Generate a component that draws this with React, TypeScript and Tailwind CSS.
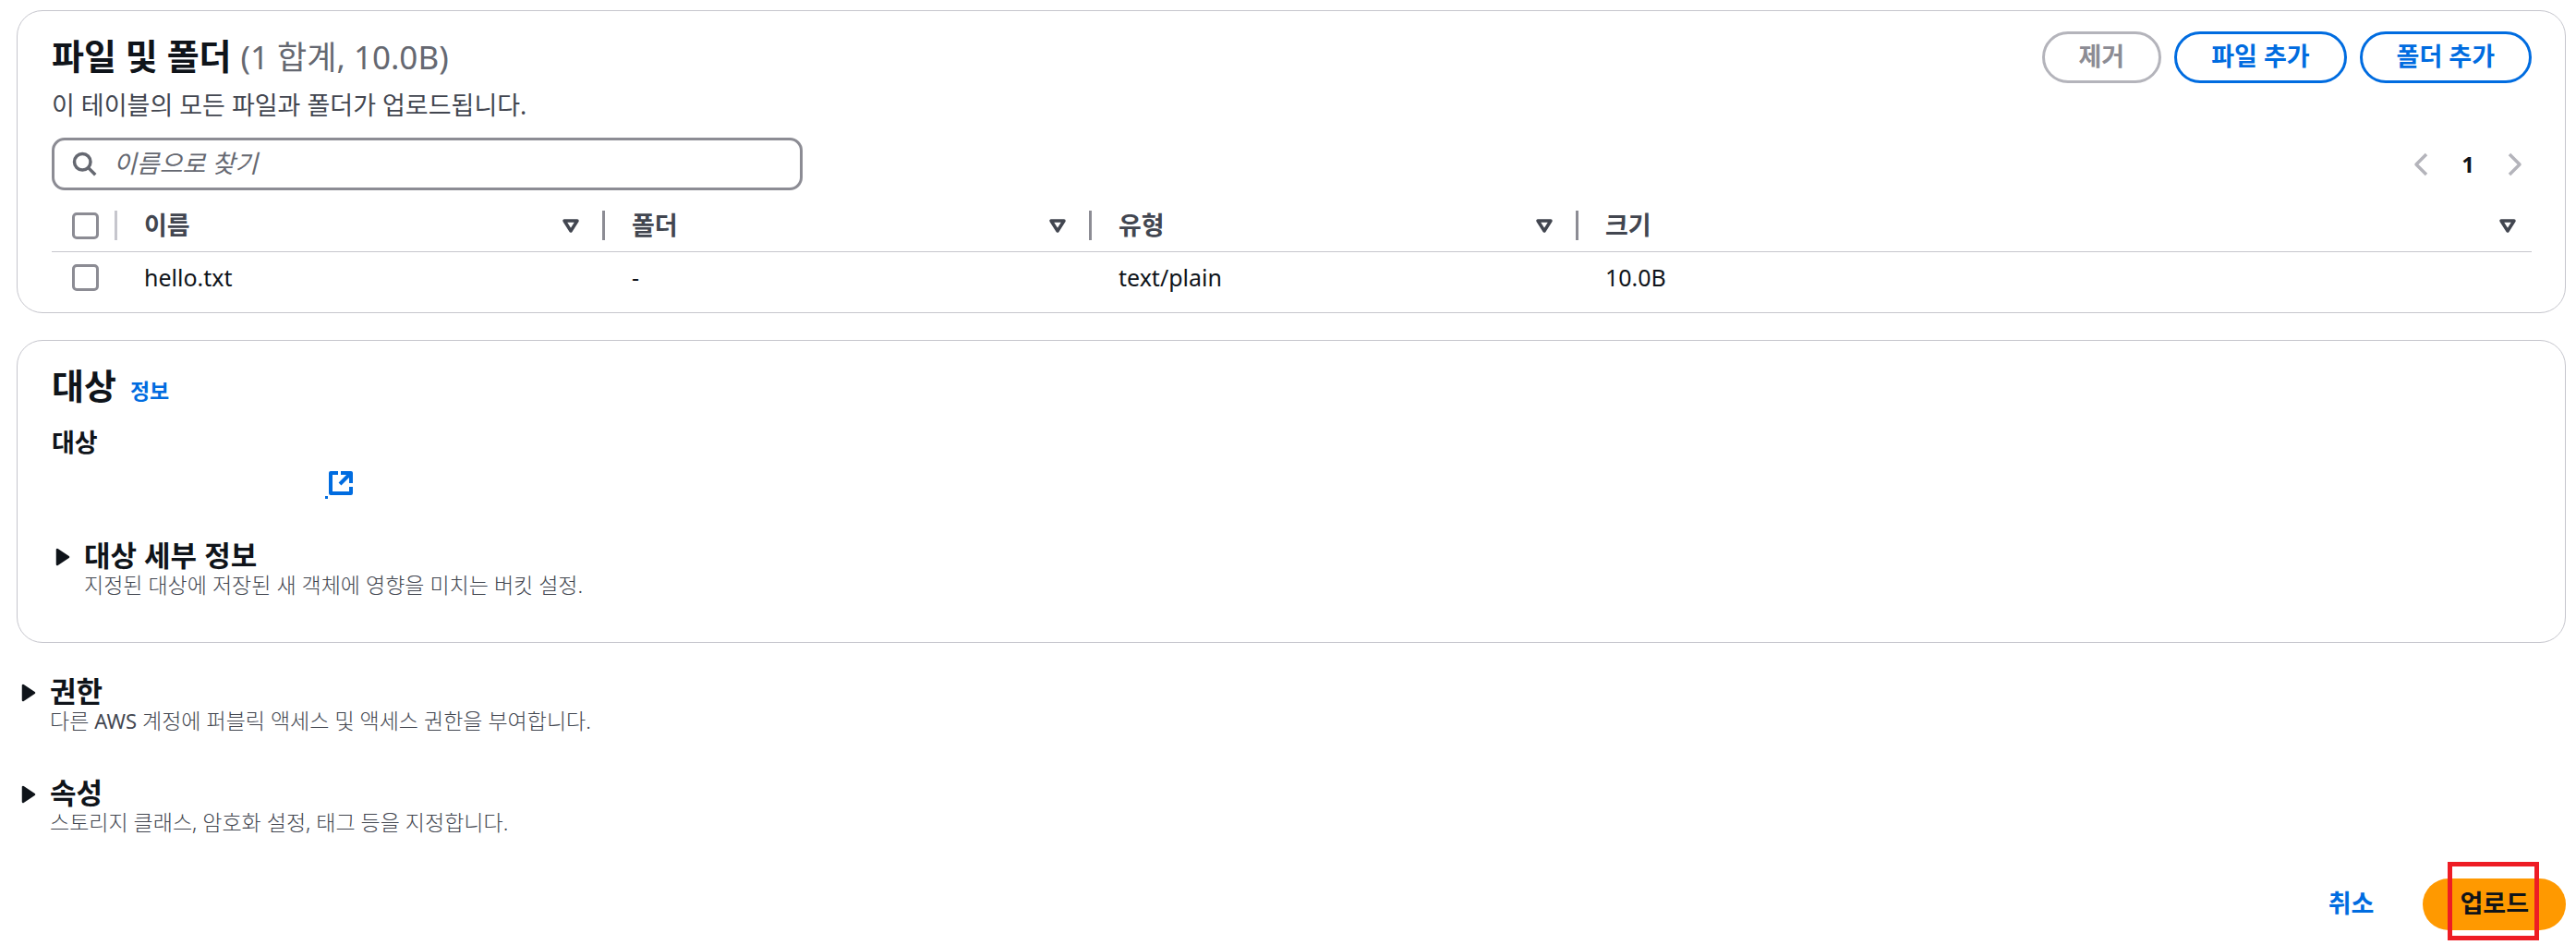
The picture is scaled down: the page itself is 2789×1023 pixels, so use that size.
import { useState } from 'react';
import type { ReactNode } from 'react';

type FileRow = {
  name: string;
  folder: string;
  type: string;
  size: string;
};

const files: FileRow[] = [
  { name: 'hello.txt', folder: '-', type: 'text/plain', size: '10.0B' },
];

const columns = ['이름', '폴더', '유형', '크기'];

const checkboxClass =
  'block size-[29px] appearance-none rounded-[5px] border-[3px] border-[#8c8c94] bg-white checked:bg-[#006ce0]';

function SearchIcon() {
  return (
    <svg width="28" height="28" viewBox="0 0 16 16" fill="none" stroke="#656871" strokeWidth="2" aria-hidden="true">
      <circle cx="7" cy="7" r="5" />
      <path d="m15 15-4.5-4.5" />
    </svg>
  );
}

function SortIcon() {
  return (
    <svg width="20" height="18" viewBox="0 0 20 18" fill="none" stroke="#424650" strokeWidth="3.5" strokeLinejoin="round" aria-hidden="true">
      <path d="M3 4h14l-7 11z" />
    </svg>
  );
}

function Chevron({ d }: { d: string }) {
  return (
    <svg width="16" height="26" viewBox="0 0 16 26" fill="none" stroke="#b4b4bb" strokeWidth="3.5" strokeLinejoin="round" aria-hidden="true">
      <path d={d} />
    </svg>
  );
}

function ExternalIcon() {
  return (
    <svg width="28" height="28" viewBox="0 0 28 28" fill="none" stroke="#006ce0" strokeWidth="4" strokeLinejoin="round" aria-hidden="true">
      <path d="M11 3H3v22h22v-7" />
      <path d="M14 3h11v11" />
      <path d="M24 4 13 15" />
    </svg>
  );
}

function PillButton({ children, disabled }: { children: ReactNode; disabled?: boolean }) {
  return (
    <button
      type="button"
      disabled={disabled}
      className="h-14 rounded-full border-[3px] border-[#006ce0] px-[37px] pb-[3px] text-[27px] leading-8 font-bold text-[#006ce0] disabled:border-[#b4b4bb] disabled:text-[#8c8c94]"
    >
      {children}
    </button>
  );
}

function Expandable({ title, children }: { title: string; children: ReactNode }) {
  const [open, setOpen] = useState(false);

  return (
    <section className="flex gap-[15px]">
      <svg width="16" height="20" viewBox="0 0 16 20" className="mt-[14px]" aria-hidden="true">
        <path d="M2 2v16l12-8z" fill="#0f141a" stroke="#0f141a" strokeWidth="2.5" strokeLinejoin="round" />
      </svg>
      <div>
        <h3>
          <button
            type="button"
            aria-expanded={open}
            onClick={() => setOpen(!open)}
            className="block text-[31px] leading-[44px] font-bold"
          >
            {title}
          </button>
        </h3>
        <p className="-mt-[6px] text-[23px] leading-8 font-light text-[#424650]">{children}</p>
      </div>
    </section>
  );
}

export default function App() {
  return (
    <main className="min-h-screen bg-white pt-[11px] pr-[11px] pb-[15px] pl-[18px] font-['Noto_Sans','Noto_Sans_CJK_KR',sans-serif] text-[#0f141a]">
      <section className="rounded-[28px] border border-[#c6c6cd] pt-[22px] pr-9 pb-[10px] pl-[37px]">
        <header className="flex items-start justify-between">
          <div>
            <h2 className="text-[38px] leading-13 font-bold">
              파일 및 폴더{' '}
              <span className="text-[35px] font-normal text-[#656871]">(1 합계, 10.0B)</span>
            </h2>
            <p className="mt-2 text-[27px] leading-9 text-[#424650]">
              이 테이블의 모든 파일과 폴더가 업로드됩니다.
            </p>
          </div>
          <div className="flex gap-[14px]">
            <PillButton disabled>제거</PillButton>
            <PillButton>파일 추가</PillButton>
            <PillButton>폴더 추가</PillButton>
          </div>
        </header>

        <div className="mt-[17px] flex items-center justify-between">
          <label className="flex h-[57px] w-[813px] items-center gap-[18px] rounded-[14px] border-[3px] border-[#8c8c94] px-[18px] pb-[2px]">
            <SearchIcon />
            <input
              type="search"
              aria-label="이름으로 찾기"
              placeholder="이름으로 찾기"
              className="min-w-0 flex-1 bg-transparent text-[27px] leading-8 outline-none placeholder:text-[#656871] placeholder:italic"
            />
          </label>
          <nav aria-label="페이지" className="flex items-center gap-9 pr-[10px]">
            <button type="button" disabled aria-label="이전 페이지">
              <Chevron d="M14 2 3 13l11 11" />
            </button>
            <button type="button" aria-current="page" className="text-[24px] leading-8 font-bold">
              1
            </button>
            <button type="button" disabled aria-label="다음 페이지">
              <Chevron d="m2 2 11 11L2 24" />
            </button>
          </nav>
        </div>

        <table className="mt-[11px] w-full table-fixed border-collapse text-left">
          <colgroup>
            <col className="w-[71px]" />
            <col className="w-[528px]" />
            <col className="w-[527px]" />
            <col className="w-[527px]" />
            <col />
          </colgroup>
          <thead>
            <tr className="border-b border-[#c6c6cd]">
              <th className="h-[55px] p-0">
                <div className="flex h-8 items-center justify-between border-r-[3px] border-[#c6c6cd] pl-[22px]">
                  <input type="checkbox" aria-label="모두 선택" className={checkboxClass} />
                </div>
              </th>
              {columns.map((column, i) => (
                <th key={column} className="h-[55px] p-0">
                  <div
                    className={
                      i < columns.length - 1
                        ? 'flex h-8 items-center justify-between border-r-[3px] border-[#8c8c94] pr-6 pl-[29px]'
                        : 'flex h-8 items-center justify-between pr-4 pl-[29px]'
                    }
                  >
                    <span className="text-[27px] leading-8 font-bold text-[#424650]">{column}</span>
                    <button type="button" aria-label={`${column} 정렬`}>
                      <SortIcon />
                    </button>
                  </div>
                </th>
              ))}
            </tr>
          </thead>
          <tbody className="text-[25px] leading-8">
            {files.map((file) => (
              <tr key={file.name}>
                <td className="h-14 py-0 pr-0 pl-[22px]">
                  <input type="checkbox" aria-label={`${file.name} 선택`} className={checkboxClass} />
                </td>
                <td className="py-0 pr-0 pl-[29px]">{file.name}</td>
                <td className="py-0 pr-0 pl-[29px]">{file.folder}</td>
                <td className="py-0 pr-0 pl-[29px]">{file.type}</td>
                <td className="py-0 pr-0 pl-[29px]">{file.size}</td>
              </tr>
            ))}
          </tbody>
        </table>
      </section>

      <section className="mt-[29px] rounded-[28px] border border-[#c6c6cd] pt-[22px] pr-9 pb-[46px] pl-[37px]">
        <header className="flex items-baseline gap-[15px]">
          <h2 className="text-[38px] leading-13 font-bold">대상</h2>
          <a href="#info" className="text-[23px] leading-8 font-bold text-[#006ce0]">
            정보
          </a>
        </header>
        <div className="mt-[18px] text-[27px] leading-9 font-bold">대상</div>
        <a href="#bucket" aria-label="대상 버킷 열기" className="mt-2 ml-[296px] flex h-9 w-8 items-center text-[#006ce0]">
          <span className="mt-[30px] h-[3px] w-[3px] bg-[#006ce0]" />
          <ExternalIcon />
        </a>
        <div className="mt-[38px] pl-1">
          <Expandable title="대상 세부 정보">지정된 대상에 저장된 새 객체에 영향을 미치는 버킷 설정.</Expandable>
        </div>
      </section>

      <div className="mt-[30px] flex flex-col gap-10 pl-[5px]">
        <Expandable title="권한">
          다른 <span className="text-[22px] font-normal">AWS</span> 계정에 퍼블릭 액세스 및 액세스 권한을 부여합니다.
        </Expandable>
        <Expandable title="속성">스토리지 클래스, 암호화 설정, 태그 등을 지정합니다.</Expandable>
      </div>

      <footer className="mt-[45px] flex items-center justify-end">
        <button type="button" className="px-[53px] pb-[3px] text-[27px] leading-8 font-bold text-[#006ce0]">
          취소
        </button>
        <div className="relative">
          <button type="button" className="h-14 rounded-full bg-[#ff9900] px-10 pb-[3px] text-[27px] leading-8 font-bold">
            업로드
          </button>
          <div className="pointer-events-none absolute -top-[18px] right-[29px] -bottom-[11px] left-[27px] border-5 border-[#ee1c24]" />
        </div>
      </footer>
    </main>
  );
}
